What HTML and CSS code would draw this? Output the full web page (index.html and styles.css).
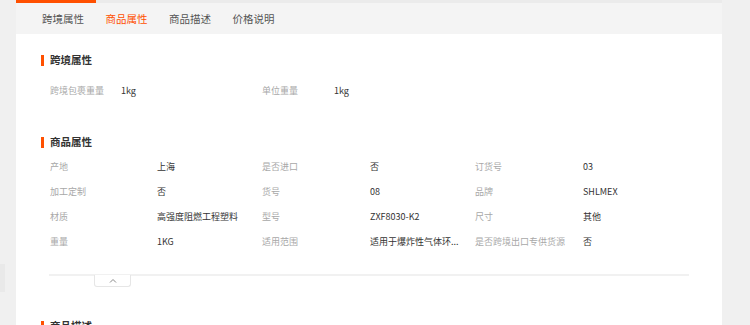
FILE: index.html
```html
<!DOCTYPE html>
<html lang="zh-CN">
<head>
<meta charset="utf-8">
<link rel="stylesheet" href="styles.css">
</head>
<body>
<div class="page">
  <div class="gutter"><span class="edge-tab"></span></div>
  <div class="main">
    <div class="topline"><span class="topline-active"></span></div>
    <nav class="tabs">
      <span class="tab">跨境属性</span>
      <span class="tab active">商品属性</span>
      <span class="tab">商品描述</span>
      <span class="tab">价格说明</span>
    </nav>
    <div class="content">
      <h2 class="heading first">跨境属性</h2>
      <div class="grid grid-cross">
        <span class="k">跨境包裹重量</span><span class="v">1kg</span>
        <span class="k">单位重量</span><span class="v">1kg</span>
      </div>

      <h2 class="heading second">商品属性</h2>
      <div class="grid grid-attr">
        <span class="k">产地</span><span class="v">上海</span>
        <span class="k">是否进口</span><span class="v">否</span>
        <span class="k">订货号</span><span class="v">03</span>

        <span class="k">加工定制</span><span class="v">否</span>
        <span class="k">货号</span><span class="v">08</span>
        <span class="k">品牌</span><span class="v">SHLMEX</span>

        <span class="k">材质</span><span class="v">高强度阻燃工程塑料</span>
        <span class="k">型号</span><span class="v">ZXF8030-K2</span>
        <span class="k">尺寸</span><span class="v">其他</span>

        <span class="k">重量</span><span class="v">1KG</span>
        <span class="k">适用范围</span><span class="v">适用于爆炸性气体环...</span>
        <span class="k">是否跨境出口专供货源</span><span class="v">否</span>
      </div>

      <div class="divider">
        <span class="fold">
          <svg width="8" height="5" viewBox="0 0 8 5"><path d="M1 4.5 L4 1.5 L7 4.5" fill="none" stroke="#888" stroke-width="1"/></svg>
        </span>
      </div>

      <h2 class="heading third">商品描述</h2>
    </div>
  </div>
  <div class="rail"></div>
</div>
</body>
</html>
```

FILE: styles.css
```css
* { box-sizing: border-box; }
html, body {
  margin: 0;
  padding: 0;
  background: #f0f0f0;
  font-family: "Noto Sans CJK SC", "Noto Sans", sans-serif;
  color: #333;
  overflow: clip;
}
.page {
  display: flex;
  align-items: flex-start;
  width: 750px;
  height: 325px;
  overflow: clip;
}
.gutter {
  width: 16px;
  height: 325px;
  flex: none;
  background: #f0f0f0;
  position: relative;
}
.edge-tab {
  position: absolute;
  left: 0;
  top: 264px;
  width: 5px;
  height: 28px;
  background: #e9e9e9;
}
.rail {
  width: 28px;
  height: 325px;
  flex: none;
  background: #f0f0f0;
}
.main {
  width: 706px;
  flex: none;
  background: #fff;
  display: flex;
  flex-direction: column;
}
.topline {
  height: 3px;
  background: #ebebeb;
  display: flex;
}
.topline-active {
  width: 80px;
  height: 3px;
  background: #ff5000;
}
.tabs {
  height: 31px;
  background: #f4f4f4;
  display: flex;
  align-items: center;
  gap: 10px;
  padding-left: 26px;
  padding-top: 1px;
}
.tab {
  font-size: 10.5px;
  line-height: 16px;
  color: #555;
  width: 53.5px;
}
.tab.active { color: #ff5000; }

.content {
  padding-left: 25px;
  padding-right: 33px;
}
.heading {
  margin: 0;
  font-size: 10.5px;
  line-height: 16px;
  font-weight: bold;
  color: #333;
  display: flex;
  align-items: center;
  gap: 6px;
}
.heading::before {
  content: "";
  width: 3px;
  height: 11px;
  background: #ff5000;
  flex: none;
}
.heading.first { margin-top: 18px; }
.heading.second { margin-top: 34px; }
.heading.third { margin-top: 42px; }

.grid {
  display: grid;
  margin-left: 9px;
  font-size: 9px;
  white-space: nowrap;
}
.grid-cross {
  margin-top: 12px;
  grid-template-columns: 71px 141px 72px 1fr;
  grid-auto-rows: 20px;
  align-items: center;
}
.grid-attr {
  margin-top: 4px;
  grid-template-columns: 107px 105px 108px 105px 108px 107px;
  grid-auto-rows: 25px;
  align-items: center;
}
.k { color: #a8a8a8; }
.v { color: #333; }

.divider {
  margin-top: 20px;
  margin-left: 8px;
  width: 640px;
  height: 2px;
  background: #f1f1f1;
  position: relative;
}
.fold {
  position: absolute;
  left: 45px;
  top: 1px;
  width: 37px;
  height: 12px;
  background: #fff;
  border: 1px solid #e6e6e6;
  border-top: none;
  border-radius: 0 0 3px 3px;
  display: flex;
  align-items: center;
  justify-content: center;
}
```
